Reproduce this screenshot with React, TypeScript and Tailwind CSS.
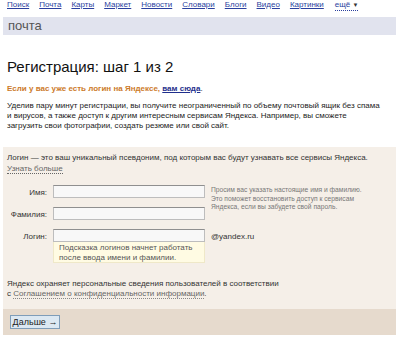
import React from "react";

const navLinks = ["Поиск", "Почта", "Карты", "Маркет", "Новости", "Словари", "Блоги", "Видео", "Картинки"];

const Field: React.FC<{label: string; children?: React.ReactNode; right?: React.ReactNode; fixed?: boolean}> = ({label, children, right, fixed}) => {
    return <div className={fixed ? "flex items-start h-[13px]" : "flex items-start"}>
        <div className="w-[44px] text-right text-[8px] leading-[13px] text-[#333] pt-[1px]">{label}</div>
        <div className="ml-[6px] w-[152px]">
            <div className="h-[13px] border border-[#bdbdbd] border-t-[#8f8f8f] bg-[#f8f8f8]"/>
            {children}
        </div>
        <div className="ml-[6px] flex-1">{right}</div>
    </div>
}

const App: React.FC = () => {
    return <div className="w-[396px] h-[343px] overflow-hidden bg-white font-['Liberation_Sans',Arial,sans-serif] text-[#222]">
        <div className="flex items-center gap-[10px] pl-[7px] h-[10px] text-[8px] leading-[10px]">
            {navLinks.map(l => <a key={l} className="text-[#2a3f9e] underline">{l}</a>)}
            <span className="ml-[1px] text-[#2a3f9e] border-b border-dotted border-[#2a3f9e] leading-[9px]">ещё <span className="text-[6px] text-[#333]">▼</span></span>
        </div>
        <div className="mt-[7px] ml-[3px] h-[18px] bg-[#e1e3ee] pl-[5px] text-[13px] leading-[18px] text-[#555]">почта</div>

        <h1 className="mt-[23px] ml-[7px] text-[15px] leading-[18px] text-[#111]">Регистрация: шаг 1 из 2</h1>
        <p className="mt-[8px] ml-[7px] text-[8px] leading-[10px] font-bold text-[#cc7a2a] whitespace-nowrap">
            Если у вас уже есть логин на Яндексе, <a className="text-[#1f2f8c] underline">вам сюда</a><span className="text-[#222] font-normal">.</span>
        </p>
        <div className="mt-[7px] ml-[7px] text-[8px] leading-[10px] text-[#222] whitespace-nowrap">
            <div>Уделив пару минут регистрации, вы получите неограниченный по объему почтовый ящик без спама</div>
            <div>и вирусов, а также доступ к другим интересным сервисам Яндекса. Например, вы сможете</div>
            <div>загрузить свои фотографии, создать резюме или свой сайт.</div>
        </div>

        <div className="mt-[16px] ml-[3px] bg-[#f5efe8]">
            <div className="pt-[5px] pl-[4px] pb-[11px] text-[8px] leading-[11px] text-[#333] whitespace-nowrap">
                <div>Логин — это ваш уникальный псевдоним, под которым вас будут узнавать все сервисы Яндекса.</div>
                <span className="text-[#666] border-b border-dotted border-[#666]">Узнать больше</span>
            </div>
            <div className="flex flex-col gap-[9px]">
                <Field label="Имя:" fixed right={<div className="text-[6.7px] leading-[8.5px] text-[#777] pt-[1px] whitespace-nowrap">
                    <div>Просим вас указать настоящие имя и фамилию.</div>
                    <div>Это поможет восстановить доступ к сервисам</div>
                    <div>Яндекса, если вы забудете свой пароль.</div>
                </div>}/>
                <Field label="Фамилия:" fixed/>
                <Field label="Логин:" right={<div className="text-[8px] leading-[13px] text-[#333] pt-[1px]">@yandex.ru</div>}>
                    <div className="h-[21px] bg-[#fffbe3] border-x border-b border-[#efe8c8] pl-[5px] pt-[1px] text-[8px] leading-[9.5px] text-[#555] whitespace-nowrap">
                        <div>Подсказка логинов начнет работать</div>
                        <div>после ввода имени и фамилии.</div>
                    </div>
                </Field>
            </div>
            <div className="pt-[16px] pl-[4px] pb-[10px] text-[8px] leading-[10px] text-[#333] whitespace-nowrap">
                <div>Яндекс охраняет персональные сведения пользователей в соответствии</div>
                <div>с <span className="text-[#666] border-b border-dotted border-[#888]">Соглашением о конфиденциальности информации</span>.</div>
            </div>
            <div className="h-[26px] bg-[#e6dacd] flex items-center">
                <button className="ml-[7px] h-[14px] w-[50px] bg-[#dce8f2] border border-[#7f9db9] text-[9px] leading-[12px] text-[#222]">Дальше →</button>
            </div>
        </div>
    </div>
}

export default App
